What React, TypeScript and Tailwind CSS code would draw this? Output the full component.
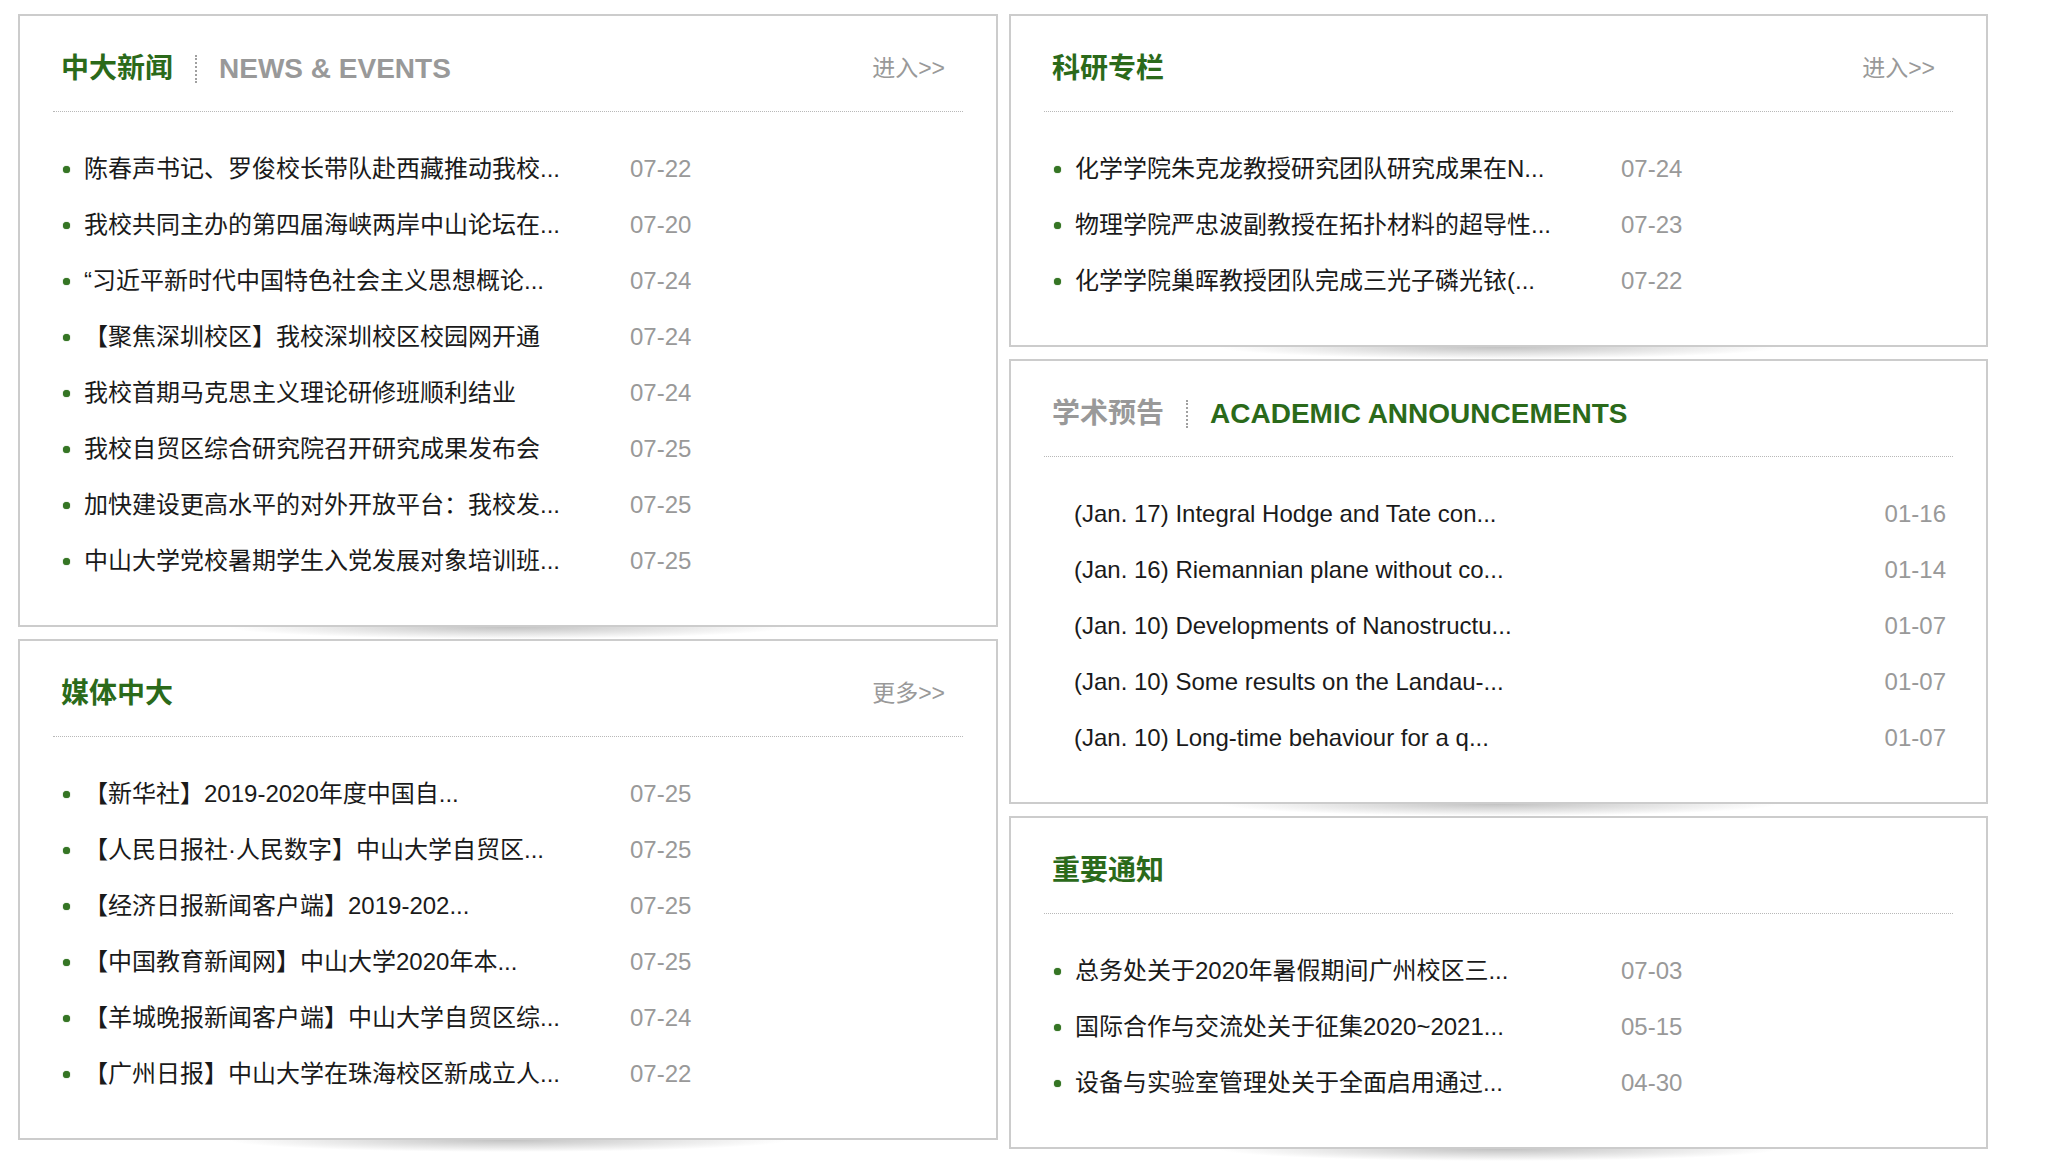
import React from 'react';

type Item = { title: string; date: string };

const news: Item[] = [
  { title: '陈春声书记、罗俊校长带队赴西藏推动我校...', date: '07-22' },
  { title: '我校共同主办的第四届海峡两岸中山论坛在...', date: '07-20' },
  { title: '“习近平新时代中国特色社会主义思想概论...', date: '07-24' },
  { title: '【聚焦深圳校区】我校深圳校区校园网开通', date: '07-24' },
  { title: '我校首期马克思主义理论研修班顺利结业', date: '07-24' },
  { title: '我校自贸区综合研究院召开研究成果发布会', date: '07-25' },
  { title: '加快建设更高水平的对外开放平台：我校发...', date: '07-25' },
  { title: '中山大学党校暑期学生入党发展对象培训班...', date: '07-25' },
];

const media: Item[] = [
  { title: '【新华社】2019-2020年度中国自...', date: '07-25' },
  { title: '【人民日报社·人民数字】中山大学自贸区...', date: '07-25' },
  { title: '【经济日报新闻客户端】2019-202...', date: '07-25' },
  { title: '【中国教育新闻网】中山大学2020年本...', date: '07-25' },
  { title: '【羊城晚报新闻客户端】中山大学自贸区综...', date: '07-24' },
  { title: '【广州日报】中山大学在珠海校区新成立人...', date: '07-22' },
];

const research: Item[] = [
  { title: '化学学院朱克龙教授研究团队研究成果在N...', date: '07-24' },
  { title: '物理学院严忠波副教授在拓扑材料的超导性...', date: '07-23' },
  { title: '化学学院巢晖教授团队完成三光子磷光铱(...', date: '07-22' },
];

const academic: Item[] = [
  { title: '(Jan. 17) Integral Hodge and Tate con...', date: '01-16' },
  { title: '(Jan. 16) Riemannian plane without co...', date: '01-14' },
  { title: '(Jan. 10) Developments of Nanostructu...', date: '01-07' },
  { title: '(Jan. 10) Some results on the Landau-...', date: '01-07' },
  { title: '(Jan. 10) Long-time behaviour for a q...', date: '01-07' },
];

const notices: Item[] = [
  { title: '总务处关于2020年暑假期间广州校区三...', date: '07-03' },
  { title: '国际合作与交流处关于征集2020~2021...', date: '05-15' },
  { title: '设备与实验室管理处关于全面启用通过...', date: '04-30' },
];

function Separator() {
  return <span className="mx-[22px] h-[28px] border-l-2 border-dotted border-[#a0a0a0]" />;
}

function Panel({ header, more, children }: { header: React.ReactNode; more?: string; children: React.ReactNode }) {
  return (
    <div>
      <div className="border-2 border-[#cccccc] bg-white px-[33px]">
        <div className="flex h-[95px] items-center justify-between pl-[8px] pr-[18px] pt-[10px]">
          <div className="flex items-center text-[28px] font-bold leading-none">{header}</div>
          {more && <span className="text-[23px] leading-none text-[#999999]">{more}</span>}
        </div>
        <div className="border-t border-dotted border-[#b8b8b8]" />
        <ul className="pb-[36px] pt-[29px]">{children}</ul>
      </div>
      <div className="flex h-[12px] justify-center">
        <div className="h-full w-[560px] bg-[radial-gradient(50%_100%_at_50%_0%,#c2c2c2,#ffffff00)]" />
      </div>
    </div>
  );
}

function BulletRows({ items }: { items: Item[] }) {
  return (
    <>
      {items.map((it, i) => (
        <li key={i} className="flex h-[56px] items-center text-[24px] leading-none">
          <span className="ml-[10px] h-[7px] w-[7px] shrink-0 rounded-full bg-[#357524] shadow-[0_0_1px_#357524]" />
          <span className="ml-[14px] w-[546px] shrink-0 whitespace-nowrap text-[#1a1a1a]">{it.title}</span>
          <span className="text-[#999999]">{it.date}</span>
        </li>
      ))}
    </>
  );
}

function AcademicRows({ items }: { items: Item[] }) {
  return (
    <>
      {items.map((it, i) => (
        <li key={i} className="flex h-[56px] items-center justify-between pl-[30px] pr-[7px] text-[24px] leading-none">
          <span className="whitespace-nowrap text-[#1a1a1a]">{it.title}</span>
          <span className="text-[#999999]">{it.date}</span>
        </li>
      ))}
    </>
  );
}

export default function App() {
  return (
    <div
      className="min-h-screen bg-white pl-[18px] pt-[14px]"
      style={{ fontFamily: '"Liberation Sans", "Noto Sans CJK SC", Arial, sans-serif' }}
    >
      <div className="flex gap-[11px]">
        <div className="flex w-[980px] flex-col">
          <Panel
            more="进入>>"
            header={
              <>
                <span className="text-[#2b6a1a]">中大新闻</span>
                <Separator />
                <span className="text-[#999999]">NEWS &amp; EVENTS</span>
              </>
            }
          >
            <BulletRows items={news} />
          </Panel>
          <Panel more="更多>>" header={<span className="text-[#2b6a1a]">媒体中大</span>}>
            <BulletRows items={media} />
          </Panel>
        </div>

        <div className="flex w-[979px] flex-col">
          <Panel more="进入>>" header={<span className="text-[#2b6a1a]">科研专栏</span>}>
            <BulletRows items={research} />
          </Panel>
          <Panel
            header={
              <>
                <span className="text-[#999999]">学术预告</span>
                <Separator />
                <span className="text-[#2b6a1a]">ACADEMIC ANNOUNCEMENTS</span>
              </>
            }
          >
            <AcademicRows items={academic} />
          </Panel>
          <Panel header={<span className="text-[#2b6a1a]">重要通知</span>}>
            <BulletRows items={notices} />
          </Panel>
        </div>
      </div>
    </div>
  );
}
